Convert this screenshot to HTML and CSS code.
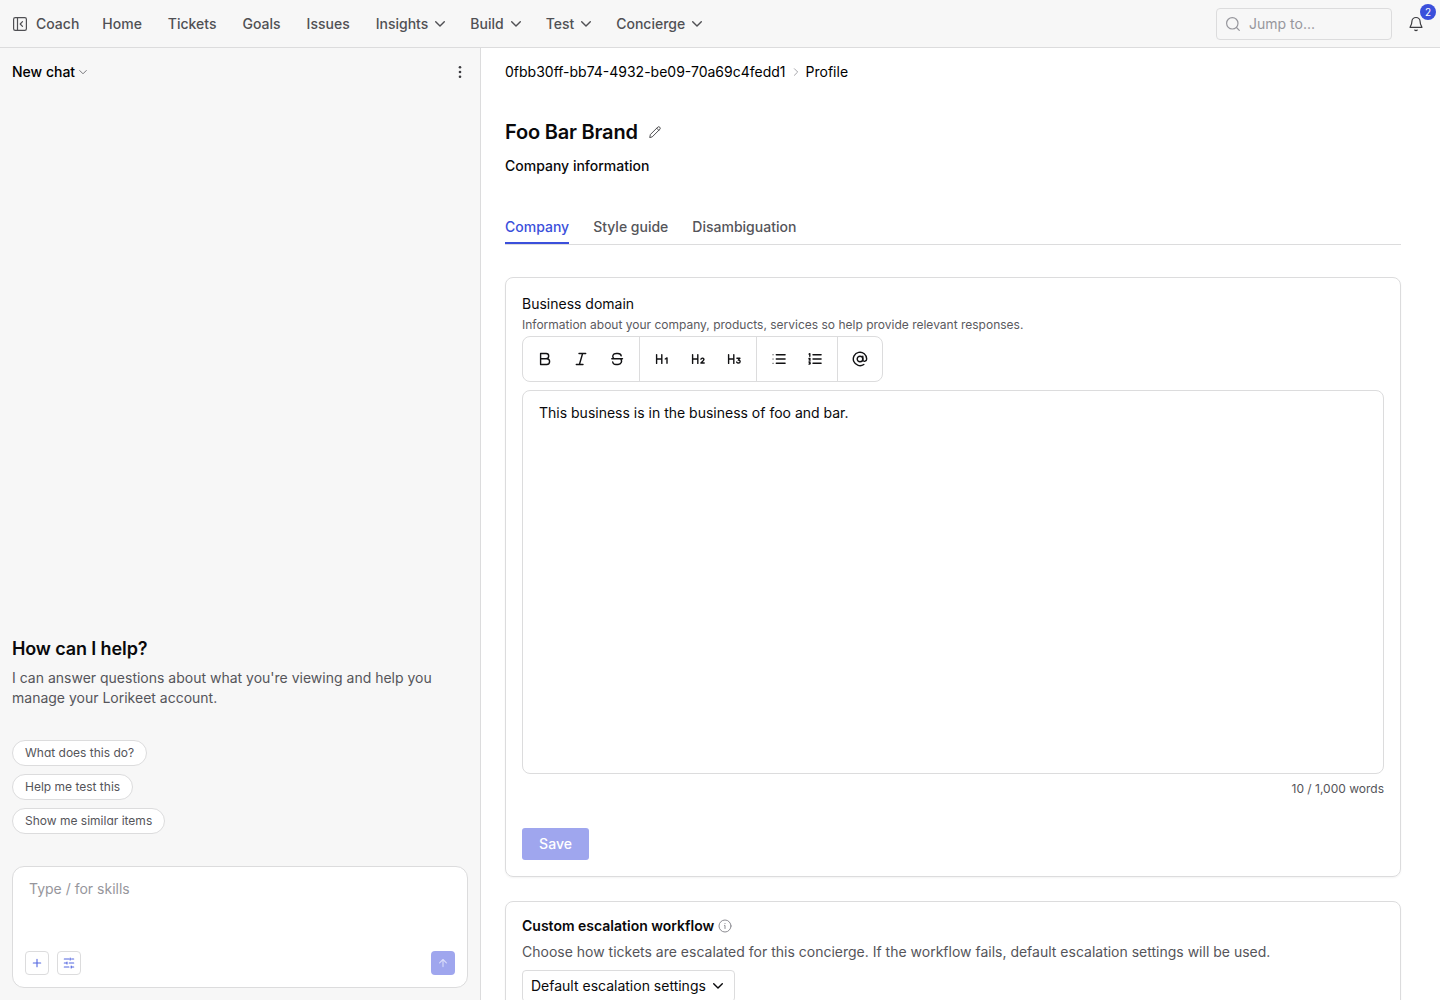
FILE: index.html
```html
<!DOCTYPE html>
<html lang="en">
<head>
<meta charset="utf-8">
<title>Profile</title>
<link rel="stylesheet" href="styles.css">
</head>
<body>
<header class="topbar">
  <nav class="nav">
    <a class="nav-item coach"><svg class="icon i16" viewBox="0 0 16 16"><rect x="1.6" y="1.6" width="12.8" height="12.8" rx="1.6"/><path d="M5.5 1.6v12.8M10.5 5.6 8.2 8l2.3 2.4"/></svg>Coach</a>
    <a class="nav-item">Home</a>
    <a class="nav-item">Tickets</a>
    <a class="nav-item">Goals</a>
    <a class="nav-item">Issues</a>
    <a class="nav-item menu">Insights<svg class="icon chev" viewBox="0 0 12 12"><path d="m1.7 3.7 4.3 4.4 4.3-4.4"/></svg></a>
    <a class="nav-item menu">Build<svg class="icon chev" viewBox="0 0 12 12"><path d="m1.7 3.7 4.3 4.4 4.3-4.4"/></svg></a>
    <a class="nav-item menu">Test<svg class="icon chev" viewBox="0 0 12 12"><path d="m1.7 3.7 4.3 4.4 4.3-4.4"/></svg></a>
    <a class="nav-item menu">Concierge<svg class="icon chev" viewBox="0 0 12 12"><path d="m1.7 3.7 4.3 4.4 4.3-4.4"/></svg></a>
  </nav>
  <div class="search"><svg class="icon i16" viewBox="0 0 16 16"><circle cx="7.3" cy="7.3" r="5.7"/><path d="m11.5 11.5 2.8 2.8"/></svg>Jump to...</div>
  <div class="bell"><svg class="icon i16" viewBox="0 0 16 16"><path d="M3.9 5.6a4.1 4.1 0 0 1 8.2 0c0 2.9.8 4 1.9 5.7H2c1.1-1.7 1.9-2.8 1.9-5.7Z"/><path d="M6.7 14.1q1.3.9 2.6 0"/></svg><span class="badge">2</span></div>
</header>
<div class="layout">
  <aside class="chat">
    <div class="chat-head">
      <div class="chat-title">New chat<svg class="icon thin" viewBox="0 0 8 8"><path d="M.7 2.5 4 5.8l3.3-3.3"/></svg></div>
      <svg class="dots" viewBox="0 0 16 16"><circle cx="8" cy="3.3" r="1.3"/><circle cx="8" cy="8" r="1.3"/><circle cx="8" cy="12.7" r="1.3"/></svg>
    </div>
    <div class="intro">
      <h2>How can I help?</h2>
      <p>I can answer questions about what you're viewing and help you manage your Lorikeet account.</p>
    </div>
    <div class="chips">
      <span class="chip">What does this do?</span>
      <span class="chip">Help me test this</span>
      <span class="chip">Show me similar items</span>
    </div>
    <div class="composer">
      <div class="placeholder">Type / for skills</div>
      <div class="actions">
        <span class="square"><svg class="icon i12" viewBox="0 0 12 12"><path d="M6 2.3v7.4M2.3 6h7.4"/></svg></span>
        <span class="square"><svg class="icon i12" viewBox="0 0 12 12"><path d="M1.3 2h4.6M8.6 2h2.1M7.2 1v2M1.3 6h2M6.2 6h4.5M4 5v2M1.3 10h4.6M8.6 10h2.1M8.2 9v2"/></svg></span>
        <span class="square send"><svg class="icon i12" viewBox="0 0 12 12"><path d="M6 9.6V2.5M2.6 5.8 6 2.5l3.4 3.3"/></svg></span>
      </div>
    </div>
  </aside>
  <main class="main">
    <div class="crumbs"><span>0fbb30ff-bb74-4932-be09-70a69c4fedd1</span><svg class="icon crumb-sep" viewBox="0 0 8 8"><path d="m2.4.7 3.3 3.3-3.3 3.3"/></svg><span>Profile</span></div>
    <div class="title"><h1>Foo Bar Brand</h1><svg class="icon pencil" viewBox="0 0 12 12"><path d="m.8 11.2.6-2.7L8.9 1c1.1-1.1 3.2 1 2.1 2.1l-7.5 7.5ZM7.7 2.2l2.1 2.1"/></svg></div>
    <div class="subtitle">Company information</div>
    <div class="tabs"><span class="tab active">Company</span><span class="tab">Style guide</span><span class="tab">Disambiguation</span></div>
    <section class="card domain">
      <div class="label">Business domain</div>
      <div class="hint">Information about your company, products, services so help provide relevant responses.</div>
      <div class="toolbar">
        <div class="group">
          <span class="tool"><svg class="icon i16" viewBox="0 0 16 16"><path d="M3.6 2.5h5.5a2.6 2.6 0 0 1 0 5.2H3.6ZM3.6 7.7h6.1a2.9 2.9 0 0 1 0 5.8H3.6Z"/></svg></span>
          <span class="tool"><svg class="icon i16" viewBox="0 0 16 16"><path d="M6 2.5h6.7M3.3 13.5H10M9.6 2.5 6.4 13.5"/></svg></span>
          <span class="tool"><svg class="icon i16" viewBox="0 0 16 16"><path d="M12.2 4.8c-.3-1.5-1.4-2.3-3.3-2.3H7.3C3.6 2.5 3 5.6 4.6 7.2M2.8 7.7h10.7M3.7 11c.2 1.7 1.4 2.5 3.2 2.5h2.2c3.3 0 4.2-3.3 2.8-5.4"/></svg></span>
        </div>
        <div class="group">
          <span class="tool"><svg class="icon i16" viewBox="0 0 16 16"><path d="M2.6 3.6v8.8M7.8 3.6v8.8M2.6 8h5.2M11.2 8l1.8-1.1v5.3"/></svg></span>
          <span class="tool"><svg class="icon i16" viewBox="0 0 16 16"><path d="M2.6 3.6v8.8M7.8 3.6v8.8M2.6 8h5.2M10.9 8.2c.6-1.7 3.3-1.1 3 .4-.2 1-1.7 2-3 3.4h3.3"/></svg></span>
          <span class="tool"><svg class="icon i16" viewBox="0 0 16 16"><path d="M2.6 3.6v8.8M7.8 3.6v8.8M2.6 8h5.2M10.9 7.2h3l-1.6 1.9c2.6-.3 2.2 2.9.2 2.9-1 0-1.5-.4-1.8-.9"/></svg></span>
        </div>
        <div class="group lists">
          <span class="tool"><svg class="icon i16" viewBox="0 0 16 16"><path d="M5.3 3.7h8.8M5.3 8h8.8M5.3 12.3h8.8"/><path class="marks" d="M1.8 3.7h.5M1.8 8h.5M1.8 12.3h.5"/></svg></span>
          <span class="tool"><svg class="icon i16" viewBox="0 0 16 16"><path d="M6 3.7h8.1M6 8h8.1M6 12.3h8.1M2.1 3.1l.7-.4v2.6M2 7.5h1L2.2 9h1M2 11h1l-.4.8c1 .2.8 1.5-.6 1.3"/></svg></span>
        </div>
        <div class="group">
          <span class="tool"><svg class="icon i16" viewBox="0 0 16 16"><circle cx="8" cy="8" r="2.8"/><path d="M10.8 5.2v3.6c0 2.3 3.9 2 3.9-.8A6.7 6.7 0 1 0 11.8 13.5"/></svg></span>
        </div>
      </div>
      <div class="editor">This business is in the business of foo and bar.</div>
      <div class="count">10 / 1,000 words</div>
      <button class="save">Save</button>
    </section>
    <section class="card workflow">
      <div class="heading">Custom escalation workflow<svg class="icon info" viewBox="0 0 14 14"><circle cx="7" cy="7" r="6"/><path d="M6.5 6.4H7v3.1M7 4.4v.1"/></svg></div>
      <p>Choose how tickets are escalated for this concierge. If the workflow fails, default escalation settings will be used.</p>
      <div class="select">Default escalation settings<svg class="icon chev" viewBox="0 0 12 12"><path d="m1.7 3.7 4.3 4.4 4.3-4.4"/></svg></div>
    </section>
  </main>
</div>
</body>
</html>
```
FILE: styles.css
```css
* { box-sizing: border-box; }
body { margin: 0; height: 1000px; overflow: hidden; display: flex; flex-direction: column; background: #fff; color: #09090b; font: 400 14px/20px Inter, "Liberation Sans", sans-serif; }
h1, h2, p { margin: 0; }
.icon { display: block; flex: none; fill: none; stroke: currentColor; stroke-width: 1.2; stroke-linecap: round; stroke-linejoin: round; }
.i16 { width: 16px; height: 16px; }
.i12 { width: 12px; height: 12px; }
.chev { width: 12px; height: 12px; stroke-width: 1.4; }

.topbar { display: flex; align-items: center; height: 48px; flex: none; padding: 0 16px 0 12px; background: #f7f7f7; border-bottom: 1px solid #dcdcdd; color: #505054; }
.nav { display: flex; gap: 26px; font-weight: 500; flex: 1; }
.nav-item { display: flex; align-items: center; }
.coach { gap: 8px; margin-right: -3px; }
.menu { gap: 6px; }
.menu + .menu { margin-left: -2px; }
.search { display: flex; align-items: center; gap: 8px; width: 176px; height: 32px; padding: 0 8px; border: 1px solid #dcdcdd; border-radius: 4px; color: #96969c; }
.bell { position: relative; margin-left: 16px; color: #3c3c40; }
.badge { position: absolute; left: 12px; top: -12px; width: 16px; height: 16px; border-radius: 50%; background: #3b4fdb; color: #fff; font-size: 10px; line-height: 16px; text-align: center; }

.layout { display: flex; flex: 1; min-height: 0; }
.chat { width: 481px; flex: none; display: flex; flex-direction: column; padding: 14px 12px 12px; background: #f7f7f7; border-right: 1px solid #dcdcdd; }
.chat-head { display: flex; align-items: center; justify-content: space-between; }
.chat-title { display: flex; align-items: center; gap: 4px; font-weight: 500; color: #000; }
.thin { width: 8px; height: 8px; color: #77777c; stroke-width: 1; }
.dots { width: 16px; height: 16px; fill: #3c3c40; }
.intro { margin-top: auto; color: #55555a; }
h2 { font-size: 18px; line-height: 26px; font-weight: 600; letter-spacing: -.12px; color: #09090b; margin-bottom: 6px; }
.chips { display: flex; flex-direction: column; align-items: flex-start; gap: 8px; margin: 32px 0; }
.chip { height: 26px; padding: 0 12px; border: 1px solid #dcdcdd; border-radius: 13px; background: #fff; font-size: 12px; line-height: 24px; color: #55555a; font-feature-settings: "cv11"; }
.composer { height: 122px; display: flex; flex-direction: column; justify-content: space-between; padding: 12px; border: 1px solid #dcdcdd; border-radius: 12px; background: #fff; }
.placeholder { padding-left: 4px; color: #96969c; }
.actions { display: flex; gap: 8px; }
.square { display: flex; align-items: center; justify-content: center; width: 24px; height: 24px; border: 1px solid #dcdcdd; border-radius: 4px; color: #5366e0; }
.square .icon { stroke-width: 1.1; }
.send { margin-left: auto; border: 0; background: #9fa6ee; color: #d9dcfa; }

.main { flex: 1; min-width: 0; overflow: hidden; padding: 14px 39px 0 24px; }
.crumbs { display: flex; align-items: center; gap: 6px; color: #000; }
.crumb-sep { width: 8px; height: 8px; color: #a5a5aa; stroke-width: 1; }
.title { display: flex; align-items: center; gap: 11px; margin-top: 36px; }
h1 { font-size: 20px; line-height: 28px; font-weight: 600; letter-spacing: -.2px; }
.pencil { width: 12px; height: 12px; stroke-width: .9; color: #3c3c40; }
.subtitle { margin-top: 10px; font-weight: 500; }
.tabs { display: flex; gap: 24px; margin-top: 41px; height: 28px; border-bottom: 1px solid #dcdcdd; font-weight: 500; color: #55555a; }
.tab { height: 27px; }
.active { color: #3b4fdb; border-bottom: 2px solid #3b4fdb; }
.card { padding: 16px; border: 1px solid #dcdcdd; border-radius: 8px; box-shadow: 0 1px 2px rgba(0,0,0,.05); }
.domain { margin-top: 32px; height: 600px; }
.hint { margin-top: 3px; font-size: 12px; line-height: 16px; color: #5a5a60; }
.toolbar { display: flex; width: max-content; height: 46px; margin-top: 3px; border: 1px solid #dcdcdd; border-radius: 8px; color: #111113; }
.group { display: flex; align-items: center; gap: 4px; padding: 0 6px; }
.group + .group { border-left: 1px solid #dcdcdd; }
.tool { display: flex; justify-content: center; width: 32px; }
.tool .icon { stroke-width: 1.4; }
.lists .marks { stroke-width: 1.1; opacity: .7; }
.editor { height: 384px; margin-top: 8px; padding: 12px 16px; border: 1px solid #dcdcdd; border-radius: 8px; }
.count { margin-top: 7px; text-align: right; font-size: 12px; line-height: 16px; color: #55555a; }
.save { display: block; width: 67px; height: 32px; margin-top: 31px; padding: 0; border: 0; border-radius: 3px; background: #9fa6ee; color: #fff; font: 500 14px/20px Inter, sans-serif; }
.workflow { margin-top: 24px; padding-top: 14px; height: 160px; color: #55555a; }
.heading { display: flex; align-items: center; gap: 4px; font-weight: 600; color: #09090b; }
.info { width: 14px; height: 14px; color: #8c8c92; stroke-width: 1; }
.workflow p { margin-top: 6px; }
.select { display: flex; align-items: center; gap: 6px; width: 213px; height: 32px; margin-top: 8px; padding: 0 8px; border: 1px solid #dcdcdd; border-radius: 4px; color: #09090b; }
```
